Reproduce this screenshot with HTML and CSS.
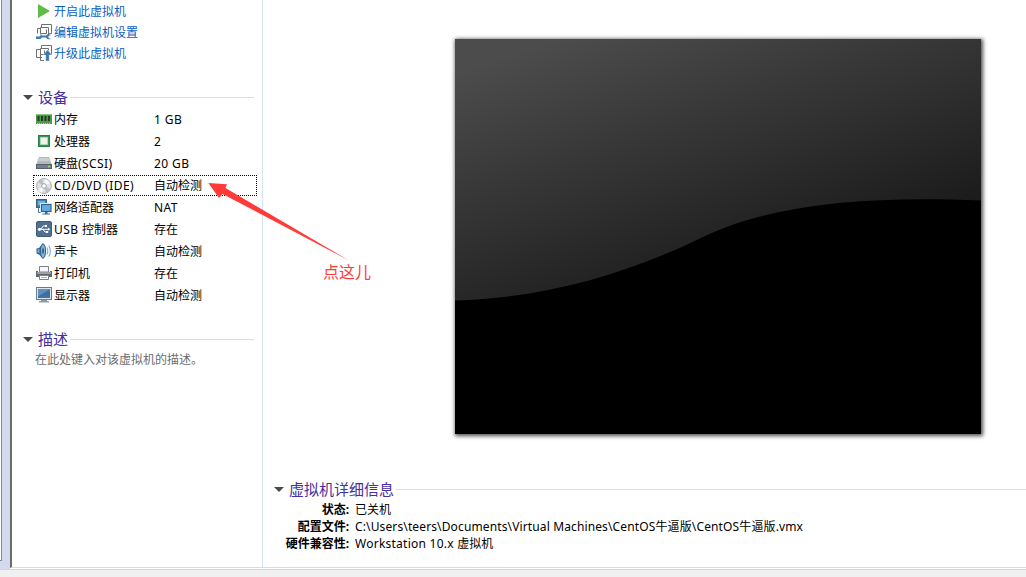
FILE: index.html
```
<!DOCTYPE html>
<html lang="zh-CN">
<head>
<meta charset="utf-8">
<title>虚拟机</title>
<link rel="stylesheet" href="styles.css">
</head>
<body>
<div class="window">
  <div class="frame">
    <div class="gutter"><div class="pane-edge"></div></div>
    <main class="page">
      <aside class="side">
        <nav class="actions">
          <a class="action"><svg class="icon" viewBox="0 0 16 16"><path d="M2 1v14L14 8z" fill="#5dbb46"/></svg><span>开启此虚拟机</span></a>
          <a class="action"><svg class="icon" viewBox="0 0 16 16"><path d="M5.500 3.500v-3h10v9H13M1.500 9.500v-5H5M4.500 9.500v-6h8v8.500M4.500 9.500h6v-4" fill="none" stroke="#707070"/><path d="M0 9.500h3.500L5 11l-1.500 1.500H0V15h4.500L6 13.500h4c1 2 3 2.200 5 1.500l-2.500-1v-2l2.500-1c-2-1.200-4-.8-5 .5H6L4.500 9.500z" fill="#4379ae"/></svg><span>编辑虚拟机设置</span></a>
          <a class="action"><svg class="icon" viewBox="0 0 16 16"><path d="M5.500 3.500v-3h10v9M.500 12.500v-8H5M6 12.500H.500M4.500 15.500v-12h8v2M4.500 9.500h4v-4M4.500 15.500H8" fill="none" stroke="#707070"/><path d="M11.500 4.800L16 10h-2.800v6h-3.500v-6H7z" fill="#3c76ad" stroke="#fff" stroke-width=".4"/></svg><span>升级此虚拟机</span></a>
        </nav>
        <section class="devices">
          <h2 class="heading"><i class="caret"></i><span>设备</span><i class="rule"></i></h2>
          <ul class="list">
            <li class="device"><svg class="icon" viewBox="0 0 16 16"><path d="M0 3h16v10H0z" fill="#4c9b49"/><path d="M0 3h16v1H0z" fill="#8bc986"/><path d="M1.500 5h2v5h-2zM5 5h2v5H5zM8.500 5h2v5h-2zM12 5h2v5h-2z" fill="#263c29"/><path d="M1 12.500h14" stroke="#c8ce8b" stroke-dasharray="1 1"/></svg><span class="name">内存</span><span class="value latin">1 GB</span></li>
            <li class="device"><svg class="icon" viewBox="0 0 16 16"><path d="M2 2h12v12H2z" fill="#389458"/><path d="M2.500 2.500h11v11h-11z" fill="none" stroke="#248047"/><path d="M4.500 4.500h7v7h-7z" fill="#eef3ec" stroke="#b4d6b7"/></svg><span class="name">处理器</span><span class="value">2</span></li>
            <li class="device"><svg class="icon" viewBox="0 0 16 16"><path d="M3 2h10l2.800 7.500H.2z" fill="#b3b8bd"/><path d="M3.500 3h9l1 3h-11z" fill="#cdd0d2"/><rect x=".5" y="9.500" width="15" height="4" fill="#747f8b" stroke="#56616d"/><path d="M12 11.500h2" stroke="#91e56f" stroke-width="1.300"/></svg><span class="name">硬盘<span class="latin">(SCSI)</span></span><span class="value latin">20 GB</span></li>
            <li class="device selected"><svg class="icon" viewBox="0 0 16 16"><circle cx="8" cy="8" r="7.400" fill="#dfe1e4" stroke="#a5a9ae"/><path d="M8 8L1.800 4A7 7 0 0 1 6 1zM8 8l6.500 3A7 7 0 0 1 10 15z" fill="#b9bfc6"/><path d="M8 8l1-7a7 7 0 0 1 5 4zM8 8l-2 7a7 7 0 0 1-4-3z" fill="#f8f8f8"/><circle cx="8" cy="8" r="2.300" fill="#fff" stroke="#a0a4a9"/></svg><span class="name latin">CD/DVD (IDE)</span><span class="value">自动检测</span></li>
            <li class="device"><svg class="icon" viewBox="0 0 16 16"><rect x=".5" y=".5" width="10" height="8" fill="#3d82b8" stroke="#39617f"/><path d="M2 2h7v4H2z" fill="#73b2de"/><path d="M2.500 9v4.500H5" fill="none" stroke="#53728b"/><rect x="4.500" y="4.500" width="11" height="8.500" fill="#2d75b3" stroke="#dceafa"/><rect x="5.500" y="5.500" width="9.500" height="7" fill="#62a9df" stroke="#285f91"/><path d="M9 13h2.500v1.500H14v1H6.500v-1H9z" fill="#466989"/></svg><span class="name">网络适配器</span><span class="value latin">NAT</span></li>
            <li class="device"><svg class="icon" viewBox="0 0 16 16"><rect x=".5" y=".5" width="15" height="15" rx="1.500" fill="#506f91" stroke="#405e7c"/><path d="M3 8.300h10M5 8l2.200-3H10M7 8.500l2 2.500h2" fill="none" stroke="#fff"/><circle cx="3.500" cy="8.300" r="1.600" fill="#fff"/><circle cx="10" cy="5" r="1.200" fill="#fff"/><path d="M10 10h2.200v2H10zM12 6.800l2.300 1.500L12 9.800z" fill="#fff"/></svg><span class="name"><span class="latin">USB </span>控制器</span><span class="value">存在</span></li>
            <li class="device"><svg class="icon" viewBox="0 0 16 16"><path d="M.5 5.500L3 5l4-4.500v15L3 11.500l-2.500-1z" fill="#2f6698"/><path d="M1.500 6.500L3.500 6v4l-2-.5z" fill="#7caed4"/><ellipse cx="7" cy="8" rx="2.600" ry="7.200" fill="#83b3d6" stroke="#2c5f8d"/><ellipse cx="7" cy="8" rx="1" ry="3" fill="#315f88"/><path d="M10.800 4.500q2 3.500 0 7M12.800 2.500q3 5.500 0 11" fill="none" stroke="#7daed1" stroke-width="1.100"/></svg><span class="name">声卡</span><span class="value">自动检测</span></li>
            <li class="device"><svg class="icon" viewBox="0 0 16 16"><path d="M3.500 1.500h9V7h-9z" fill="#f7f8fa" stroke="#7b7f86"/><path d="M0 6h2v1h12V6h2v6H0z" fill="#62676e"/><path d="M1 7h14v2H1z" fill="#9a9fa6"/><path d="M3.500 10.500h9v4h-9z" fill="#fff" stroke="#7b7f86"/><path d="M5 12.500h6" stroke="#aeb1b8"/></svg><span class="name">打印机</span><span class="value">存在</span></li>
            <li class="device"><svg class="icon" viewBox="0 0 16 16"><rect x=".5" y=".5" width="15" height="12" fill="#dce7ef" stroke="#637b8f"/><path d="M2 2h12v9H2z" fill="#3f70a1"/><path d="M2 2h12L2 9.500z" fill="#6190bb"/><path d="M5 13h6v1h2v1.500H3V14h2z" fill="#8f9ca8"/></svg><span class="name">显示器</span><span class="value">自动检测</span></li>
          </ul>
        </section>
        <section class="description">
          <h2 class="heading"><i class="caret"></i><span>描述</span><i class="rule"></i></h2>
          <p class="hint">在此处键入对该虚拟机的描述。</p>
        </section>
      </aside>
      <section class="content">
        <div class="screen">
          <svg width="526" height="395" viewBox="0 0 526 395">
            <defs><linearGradient id="sheen" gradientUnits="userSpaceOnUse" x1="10" y1="30" x2="101" y2="303"><stop offset="0" stop-color="#4c4c4c"/><stop offset="1" stop-color="#1b1b1b"/></linearGradient></defs>
            <rect width="526" height="395" fill="#000"/>
            <path d="M0 0H526V161.500C420 157 320 163 246 199C165 238 85 259 0 261.500Z" fill="url(#sheen)"/>
          </svg>
        </div>
        <section class="details">
          <h2 class="heading"><i class="caret"></i><span>虚拟机详细信息</span><i class="rule"></i></h2>
          <dl class="facts">
            <dt>状态:</dt><dd>已关机</dd>
            <dt>配置文件:</dt><dd class="path">C:\Users\teers\Documents\Virtual Machines\CentOS牛逼版\CentOS牛逼版.vmx</dd>
            <dt>硬件兼容性:</dt><dd><span class="product">Workstation 10.x </span>虚拟机</dd>
          </dl>
        </section>
      </section>
    </main>
  </div>
  <footer class="statusbar"></footer>
  <div class="note">
    <svg width="142" height="78" viewBox="0 0 142 78"><path d="M.3 0L19 1.300L17.500 5L141 77.500L14.500 11L11 15Z" fill="#ff3b38"/></svg>
    <span>点这儿</span>
  </div>
</div>
</body>
</html>
```
FILE: styles.css
```
* { box-sizing: border-box; }
body {
  margin: 0;
  font: 12px/18px "Noto Sans", "Noto Sans CJK SC", sans-serif;
  color: #000;
  background: #fff;
}
.window {
  position: relative;
  display: flex;
  flex-direction: column;
  width: 1026px;
  height: 577px;
  overflow: hidden;
}
.frame { display: flex; height: 569px; background: #d3daee; }
.gutter { width: 10px; }
.pane-edge {
  width: 2px;
  height: 561px;
  background: #fff;
  border-right: 1px solid #858991;
  border-bottom: 1px solid #858991;
}
.page {
  display: flex;
  flex: 1;
  height: 568px;
  background: #fff;
  border-left: 2px solid #6b6b6b;
  border-bottom: 1px solid #dcdcdc;
  box-shadow: 0 1px #fff;
}
.statusbar { height: 8px; background: #f0f0f0; border-top: 1px solid #d5d5d5; }
.side { width: 251px; border-right: 1px solid #d3e3f3; }
.actions { padding: 1px 0 0 24px; }
.action { display: flex; align-items: center; gap: 2px; height: 21px; color: #0a5fc4; }
.icon { flex: none; width: 16px; height: 16px; }
.action .icon { margin-top: -1px; }
.heading {
  display: flex;
  align-items: center;
  height: 20px;
  margin: 0;
  font-size: 15px;
  font-weight: 400;
  line-height: 20px;
  color: #4430a0;
}
.caret {
  width: 0;
  margin-right: 5px;
  border: 5px solid transparent;
  border-top-color: #4a4a4a;
  border-bottom: 0;
}
.rule { flex: 1; height: 1px; margin-left: 2px; background: #dcdcdc; }
.side .heading { padding: 0 8px 0 11px; }
.devices { margin-top: 23px; }
.list { margin: 1px 0 0; padding: 0; list-style: none; }
.device {
  display: flex;
  align-items: center;
  width: 224px;
  height: 22px;
  margin-left: 21px;
  padding-left: 3px;
}
.name { width: 100px; margin-left: 2px; white-space: pre; }
.name, .value { padding-top: 2px; }
.name .latin, .latin { letter-spacing: .4px; }
.selected { height: 21px; margin-top: 1px; border: 1px dotted #000; padding-left: 2px; }
.selected .name, .selected .value { padding-top: 1px; }
.description { margin-top: 23px; }
.hint { margin: 2px 0 0 23px; color: #6d6d6d; }
.content { flex: 1; }
.screen {
  width: 526px;
  height: 395px;
  margin: 39px 0 0 192px;
  box-shadow: 1px 1px 4px 1px rgba(0, 0, 0, .7);
}
.screen svg { display: block; }
.details { margin-top: 45px; }
.details .heading { padding-left: 11px; }
.facts {
  display: grid;
  grid-template-columns: 86px 1fr;
  column-gap: 6px;
  margin: 2px 0 0;
  grid-auto-rows: 17px;
  line-height: 17px;
}
.facts dt { text-align: right; font-weight: 700; white-space: nowrap; }
.facts dd { margin: 0; white-space: nowrap; }
.path { letter-spacing: .13px; }
.product { letter-spacing: .25px; }
.note { position: absolute; left: 208px; top: 183px; width: 170px; color: #ff3b38; }
.note svg { display: block; }
.note span { display: block; margin-left: 115px; font-size: 16px; line-height: 22px; }
```
